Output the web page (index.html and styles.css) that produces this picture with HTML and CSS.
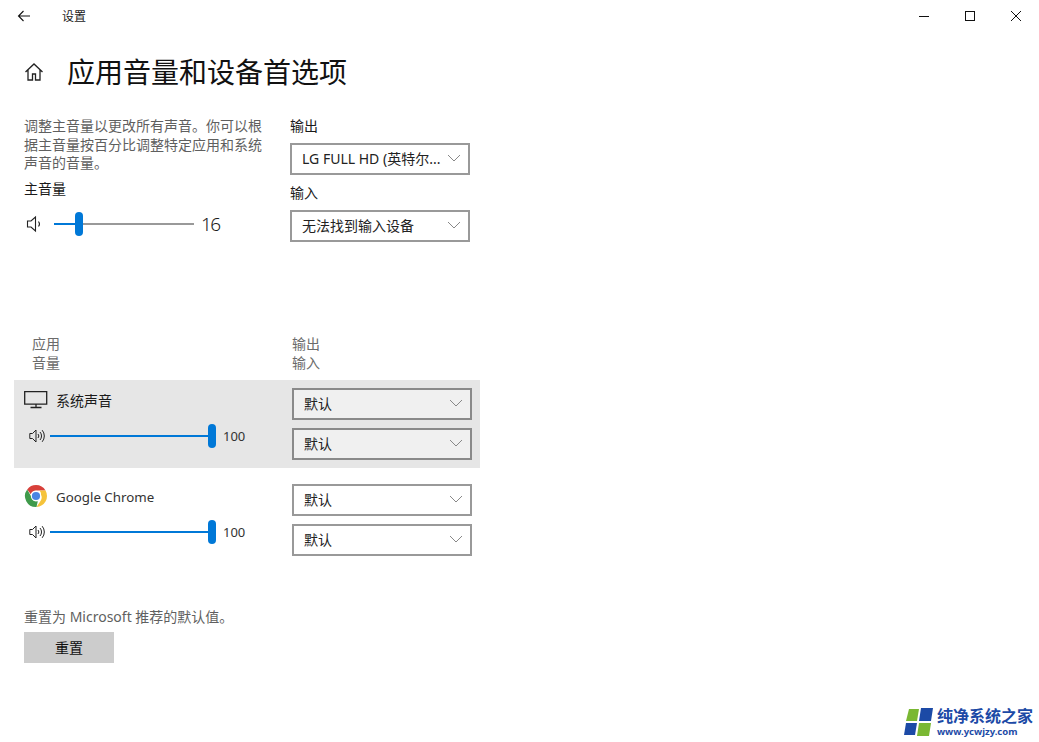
FILE: index.html
```html
<!DOCTYPE html>
<html lang="zh-CN">
<head>
    <meta charset="UTF-8">
    <title>设置</title>
    <link rel="stylesheet" href="styles.css">
</head>
<body>
    <div class="titlebar">
        <svg class="back-icon" width="16" height="16" viewBox="0 0 16 16"><path d="M14 8H3M7.500 3 2.500 8l5 5" fill="none" stroke="#111" stroke-width="1.100"/></svg>
        <span class="titlebar-text">设置</span>
        <div class="window-controls">
            <svg width="46" height="32" viewBox="0 0 46 32"><path d="M18 16.500h10" stroke="#111" stroke-width="1"/></svg>
            <svg width="46" height="32" viewBox="0 0 46 32"><rect x="18.500" y="11.500" width="9" height="9" fill="none" stroke="#111"/></svg>
            <svg width="46" height="32" viewBox="0 0 46 32"><path d="M18 11l10 10M28 11 18 21" stroke="#111" stroke-width="1"/></svg>
        </div>
    </div>

    <div class="page-header">
        <svg class="home-icon" width="20" height="20" viewBox="0 0 20 20"><path d="M1.500 10 10 2l8.500 8M4 8v10h4.500v-6h3v6H16V8" fill="none" stroke="#222" stroke-width="1.300"/></svg>
        <h1>应用音量和设备首选项</h1>
    </div>

    <div class="master">
        <div class="master-left">
            <p class="desc">调整主音量以更改所有声音。你可以根据主音量按百分比调整特定应用和系统声音的音量。</p>
            <div class="master-label">主音量</div>
            <div class="master-slider">
                <svg width="16" height="18" viewBox="0 0 16 18"><path d="M1.500 6h3.500L9.500 2v14L5 12H1.500zM12.500 6.500a4 4 0 0 1 0 5" fill="none" stroke="#222" stroke-width="1.100"/></svg>
                <div class="slider slider-wide">
                    <div class="slider-fill" style="width: 15%"></div>
                    <div class="slider-thumb"></div>
                    <div class="slider-rest"></div>
                </div>
                <span class="master-value">16</span>
            </div>
        </div>
        <div class="master-right">
            <div class="field-label">输出</div>
            <div class="select"><span>LG FULL HD (英特尔...</span><svg class="chev" width="14" height="8" viewBox="0 0 14 8"><path d="M1 1l6 6 6-6" fill="none" stroke="#888"/></svg></div>
            <div class="field-label">输入</div>
            <div class="select"><span>无法找到输入设备</span><svg class="chev" width="14" height="8" viewBox="0 0 14 8"><path d="M1 1l6 6 6-6" fill="none" stroke="#888"/></svg></div>
        </div>
    </div>

    <div class="apps-head">
        <div class="apps-head-left">应用<br>音量</div>
        <div>输出<br>输入</div>
    </div>

    <div class="app-row app-row-active">
        <div class="app-left">
            <div class="app-name">
                <svg width="24" height="20" viewBox="0 0 24 20"><path d="M.7 1.700h22v12.500H.7zM12 14.500v3M6.500 17.500h11" fill="none" stroke="#222" stroke-width="1.300"/></svg>
                <span>系统声音</span>
            </div>
            <div class="app-slider">
                <svg width="17" height="16" viewBox="0 0 17 16"><path d="M.8 5.500h2.700L7 2v12l-3.500-3.500H.8zM9 6a3 3 0 0 1 0 4M11 4a6 6 0 0 1 0 8M13.200 2.200a9 9 0 0 1 0 11.600" fill="none" stroke="#222"/></svg>
                <div class="slider slider-full"><div class="slider-fill"></div><div class="slider-thumb"></div></div>
                <span class="app-value">100</span>
            </div>
        </div>
        <div class="app-right">
            <div class="select select-app"><span>默认</span><svg class="chev" width="14" height="8" viewBox="0 0 14 8"><path d="M1 1l6 6 6-6" fill="none" stroke="#888"/></svg></div>
            <div class="select select-app"><span>默认</span><svg class="chev" width="14" height="8" viewBox="0 0 14 8"><path d="M1 1l6 6 6-6" fill="none" stroke="#888"/></svg></div>
        </div>
    </div>

    <div class="app-row">
        <div class="app-left">
            <div class="app-name">
                <svg width="24" height="24" viewBox="0 0 24 24">
                    <path d="M12 1a11 11 0 0 1 9.530 5.500H12a5.500 5.500 0 0 0-5.200 3.700L3.200 5.400A11 11 0 0 1 12 1z" fill="#d8403a"/>
                    <path d="M21.530 6.500A11 11 0 0 1 12.500 23l4.300-6.500a5.500 5.500 0 0 0 .2-5.500 5.500 5.500 0 0 0-1.500-4.500z" fill="#f5c33b"/>
                    <path d="M12.500 23A11 11 0 0 1 3.200 5.400l4.600 8a5.500 5.500 0 0 0 6 3.800z" fill="#3f9a4b"/>
                    <circle cx="12" cy="12" r="5.200" fill="#fff"/>
                    <circle cx="12" cy="12" r="4.100" fill="#4a84e4"/>
                </svg>
                <span class="app-name-latin">Google Chrome</span>
            </div>
            <div class="app-slider">
                <svg width="17" height="16" viewBox="0 0 17 16"><path d="M.8 5.500h2.700L7 2v12l-3.500-3.500H.8zM9 6a3 3 0 0 1 0 4M11 4a6 6 0 0 1 0 8M13.200 2.200a9 9 0 0 1 0 11.600" fill="none" stroke="#222"/></svg>
                <div class="slider slider-full"><div class="slider-fill"></div><div class="slider-thumb"></div></div>
                <span class="app-value">100</span>
            </div>
        </div>
        <div class="app-right">
            <div class="select select-app"><span>默认</span><svg class="chev" width="14" height="8" viewBox="0 0 14 8"><path d="M1 1l6 6 6-6" fill="none" stroke="#888"/></svg></div>
            <div class="select select-app"><span>默认</span><svg class="chev" width="14" height="8" viewBox="0 0 14 8"><path d="M1 1l6 6 6-6" fill="none" stroke="#888"/></svg></div>
        </div>
    </div>

    <div class="reset">
        <p class="reset-text">重置为 Microsoft 推荐的默认值。</p>
        <button class="reset-button">重置</button>
    </div>

    <div class="watermark">
        <svg width="30" height="30" viewBox="0 0 30 30">
            <path d="M5 2h10l-2 12H2z" fill="#7ab833"/>
            <path d="M17 1h12l-2 13H15z" fill="#1c4aa6"/>
            <path d="M2 16h11l-2 12H0z" fill="#1c4aa6"/>
            <path d="M15 16h12l-2 13H13z" fill="#7ab833"/>
        </svg>
        <div class="watermark-text">
            <div class="watermark-name">纯净系统之家</div>
            <div class="watermark-url">www.ycwjzy.com</div>
        </div>
    </div>
</body>
</html>
```

FILE: styles.css
```css
html, body {
    margin: 0;
    padding: 0;
}

body {
    position: relative;
    width: 1039px;
    height: 742px;
    overflow: hidden;
    background: #fff;
    color: #1a1a1a;
    font-family: "Noto Sans", "Noto Sans CJK SC", sans-serif;
    font-size: 14px;
}

p, h1 {
    margin: 0;
    font-weight: 400;
}

.titlebar {
    display: flex;
    align-items: center;
    height: 32px;
    padding-left: 16px;
}

.titlebar-text {
    margin-left: 30px;
    font-size: 12px;
}

.window-controls {
    display: flex;
    margin-left: auto;
}

.page-header {
    display: flex;
    align-items: center;
    height: 40px;
    margin-top: 20px;
    padding-left: 24px;
}

.home-icon {
    margin-right: 23px;
}

h1 {
    font-size: 28px;
    line-height: 40px;
    color: #111;
}

.master {
    display: flex;
    margin-top: 24px;
    padding-left: 24px;
}

.master-left {
    width: 240px;
    margin-right: 26px;
}

.desc {
    color: #5f5f5f;
    line-height: 18.500px;
    padding-top: 1px;
}

.master-label {
    margin-top: 6px;
    line-height: 20px;
}

.master-slider {
    display: flex;
    align-items: center;
    height: 24px;
    margin-top: 13px;
    padding-left: 2px;
}

.slider {
    position: relative;
    display: flex;
    align-items: center;
    height: 24px;
}

.slider-wide {
    width: 140px;
    margin-left: 12px;
}

.slider-fill {
    height: 2px;
    background: #0078d7;
}

.slider-rest {
    flex: 1;
    height: 2px;
    background: #999;
}

.slider-thumb {
    flex: none;
    width: 8px;
    height: 24px;
    border-radius: 4px;
    background: #0078d7;
}

.master-value {
    margin-left: 7px;
    font-size: 19px;
    font-weight: 300;
    letter-spacing: -1.500px;
    line-height: 24px;
}

.master-right {
    width: 180px;
}

.field-label {
    line-height: 20px;
    height: 20px;
    margin-bottom: 7px;
}

.select {
    display: flex;
    align-items: center;
    justify-content: space-between;
    box-sizing: border-box;
    width: 180px;
    height: 32px;
    margin-bottom: 8px;
    padding: 0 7px 2px 10px;
    border: 2px solid #999;
    background: #fff;
    font-size: 14px;
    color: #222;
}

.apps-head {
    display: flex;
    margin-top: 84px;
    color: #6b6b6b;
    line-height: 19px;
}

.apps-head-left {
    width: 260px;
    margin-left: 32px;
}

.app-row {
    display: flex;
    justify-content: space-between;
    box-sizing: border-box;
    width: 466px;
    height: 88px;
    margin-left: 14px;
    margin-bottom: 8px;
    padding: 8px 8px 0 10px;
}

.app-row-active {
    margin-top: 8px;
    background: #e6e6e6;
}

.app-row-active .select {
    background: #f0f0f0;
    border-color: #8a8a8a;
}

.app-left {
    width: 230px;
}

.app-name {
    display: flex;
    align-items: center;
    gap: 8px;
    height: 24px;
    font-size: 14px;
}

.app-name-latin {
    margin-top: 2px;
    font-size: 13.300px;
    color: #333;
}

.app-slider {
    display: flex;
    align-items: center;
    height: 24px;
    margin-top: 12px;
    padding-left: 5px;
}

.slider-full {
    flex: none;
    width: 166px;
    margin-left: 4px;
}

.slider-full .slider-fill {
    flex: 1;
}

.app-value {
    margin-left: 7px;
    font-size: 13px;
    color: #333;
}

.select-app {
    margin-bottom: 8px;
}

.reset {
    margin-top: 43px;
    padding-left: 24px;
}

.reset-text {
    color: #5f5f5f;
    line-height: 20px;
    margin-bottom: 5px;
}

.reset-button {
    display: block;
    width: 90px;
    height: 31px;
    padding: 0 0 2px;
    border: none;
    background: #ccc;
    color: #111;
    font-family: inherit;
    font-size: 14px;
}

.watermark {
    position: absolute;
    right: 6px;
    bottom: 4px;
    display: flex;
    align-items: center;
    gap: 3px;
    padding: 1px 0 1px 2px;
    background: #fff;
}

.watermark-name {
    color: #1c4aa6;
    font-size: 16px;
    font-weight: 700;
    line-height: 20px;
}

.watermark-url {
    color: #1c4aa6;
    font-size: 9.500px;
    font-weight: 700;
    line-height: 11px;
}
```
